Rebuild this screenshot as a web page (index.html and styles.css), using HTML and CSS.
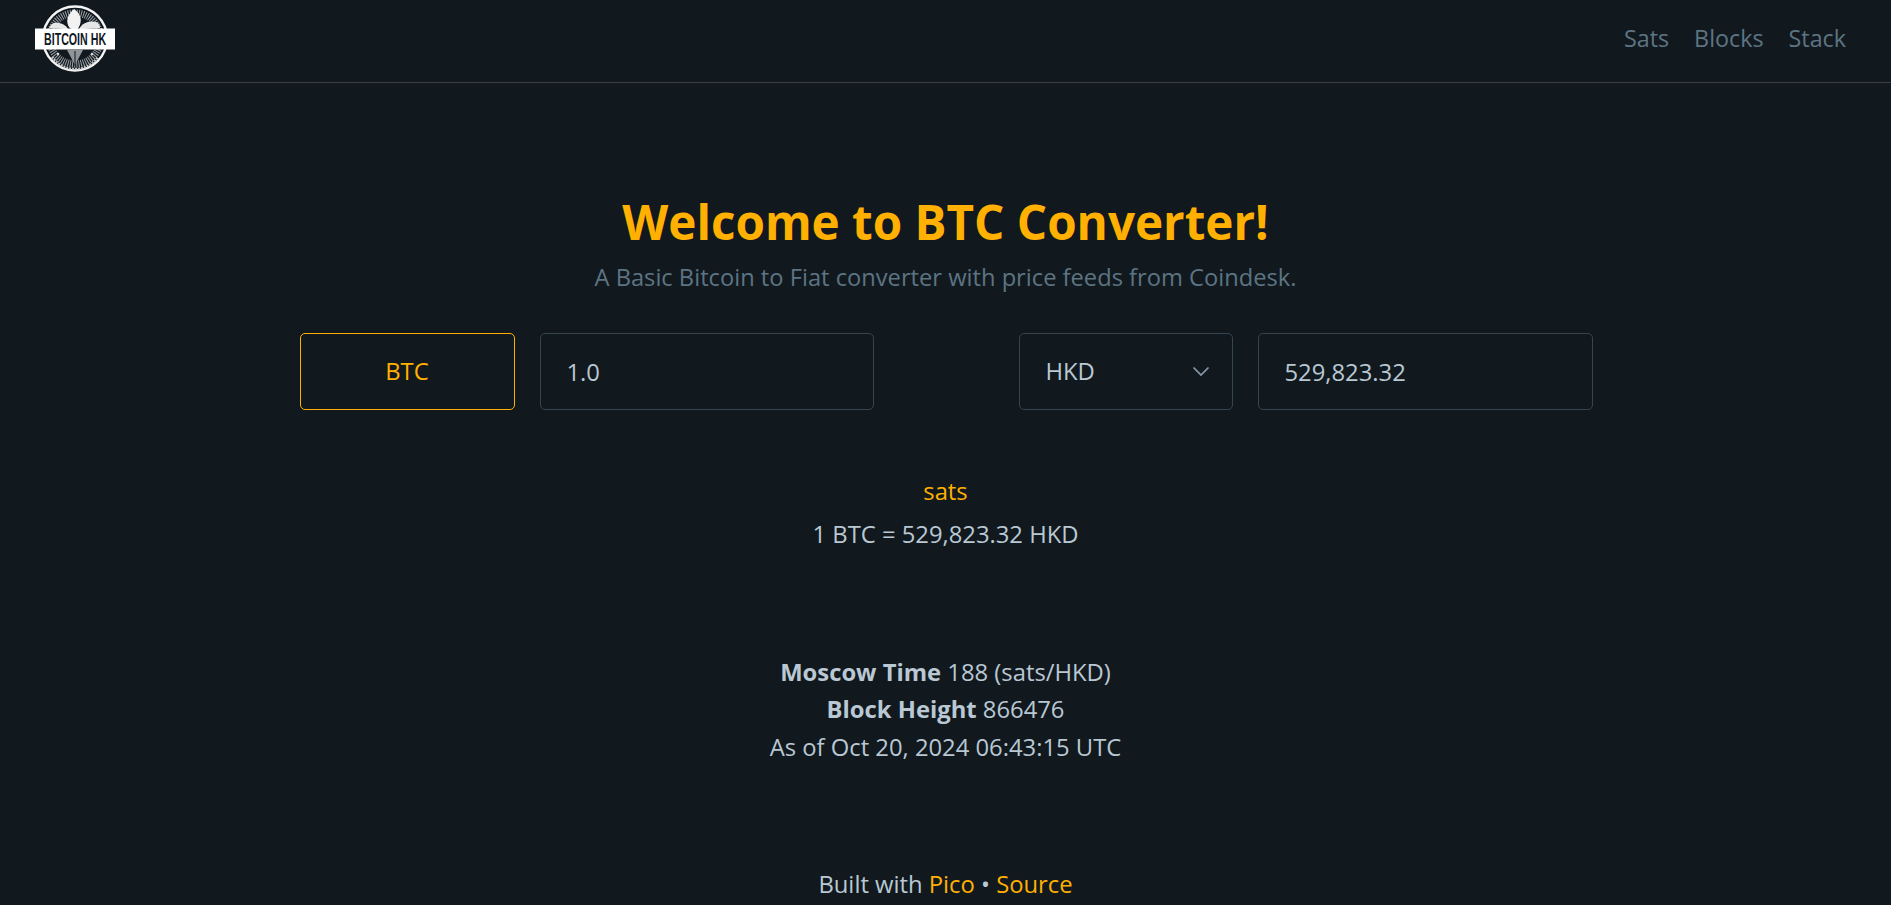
FILE: index.html
```html
<!DOCTYPE html>
<html>
<head>
    <title>BTC Converter</title>
    <meta charset="utf-8">
    <link rel="stylesheet" href="styles.css">
</head>
<body>
    <nav class="topbar">
        <a class="logo" href="#">
            <svg width="82" height="72" viewBox="0 0 82 72">
                <!-- outer rings -->
                <circle cx="41" cy="33.5" r="32" fill="#11191f" stroke="#f4f4f4" stroke-width="2.4"/>
                <circle cx="41" cy="33.5" r="25.5" fill="none" stroke="#9aa0a4" stroke-width="7" stroke-dasharray="1 1.2"/>
                <!-- bauhinia petals -->
                <path d="M40 4c-6 5-8 11-6 16 1 3 3 4 6 5l3 0c5-6 6-15-3-21z" fill="#f2f2f2"/>
                <path d="M45 24c3-6 10-9 17-7 3 1 4 3 4 6l-16 1z" fill="#e6e6e6"/>
                <path d="M34 24c-2-4-8-7-14-6-3 1-4 3-5 5l15 1z" fill="#e6e6e6"/>
                <path d="M41 60l-8-15h16z" fill="#8f9599"/>
                <path d="M41 46v15" stroke="#11191f" stroke-width="1"/>
                <path d="M18 48a28 28 0 0 0 46 0" fill="none" stroke="#c8c8c8" stroke-width="2.4" stroke-dasharray="2 1" transform="translate(0 4)"/>
                <circle cx="24" cy="49" r="1.2" fill="#ddd"/>
                <circle cx="58" cy="49" r="1.2" fill="#ddd"/>
                <!-- banner -->
                <rect x="1" y="23.5" width="80" height="21" fill="#fff"/>
                <text class="logo-text" transform="translate(10 40) scale(.646 1)">BITCOIN HK</text>
            </svg>
        </a>
        <ul class="nav-links">
            <li><a href="#">Sats</a></li>
            <li><a href="#">Blocks</a></li>
            <li><a href="#">Stack</a></li>
        </ul>
    </nav>

    <main class="content">
        <h1>Welcome to BTC Converter!</h1>
        <p class="subtitle">A Basic Bitcoin to Fiat converter with price feeds from Coindesk.</p>

        <div class="converter">
            <div class="pair">
                <button class="unit-btn">BTC</button>
                <input class="field" type="text" value="1.0">
            </div>
            <div class="pair">
                <div class="select-box">
                    <span>HKD</span>
                    <svg width="24" height="24" viewBox="0 0 24 24" fill="none" stroke="#8a99a6" stroke-width="1.7"><path d="M4.5 8.5l7.5 7.5 7.5-7.5"/></svg>
                </div>
                <input class="field" type="text" value="529,823.32">
            </div>
        </div>

        <div class="rate">
            <a href="#">sats</a>
            <p>1 BTC = 529,823.32 HKD</p>
        </div>

        <div class="stats">
            <div><strong>Moscow Time</strong> 188 (sats/HKD)</div>
            <div><strong>Block Height</strong> 866476</div>
            <div>As of Oct 20, 2024 06:43:15 UTC</div>
        </div>

        <footer class="foot">Built with <a href="#">Pico</a> • <a href="#">Source</a></footer>
    </main>
</body>
</html>
```

FILE: styles.css
```css
html, body {
    margin: 0;
    height: 905px;
    overflow: hidden;
}

body {
    background: #11191f;
    color: #b9c8d3;
    font-family: "Open Sans", sans-serif;
    font-size: 23.8px;
    line-height: 37.5px;
}

a {
    color: #ffb000;
    text-decoration: none;
}

.topbar {
    display: flex;
    justify-content: space-between;
    align-items: center;
    height: 82px;
    padding: 0 45px 0 34px;
    border-bottom: 1px solid #3d3f40;
}

.logo {
    display: flex;
}

.logo-text {
    font-family: "Liberation Sans", sans-serif;
    font-size: 16.5px;
    font-weight: 700;
    fill: #11191f;
}

.nav-links {
    display: flex;
    gap: 25px;
    list-style: none;
    margin: 0 0 4px;
    padding: 0;
    font-size: 23.3px;
}

.nav-links a {
    color: #5d7483;
}

.content {
    text-align: center;
}

h1 {
    margin: 109px 0 0;
    color: #ffb000;
    font-size: 47.6px;
    line-height: 60px;
    font-weight: 700;
}

.subtitle {
    margin: 7px 0 0;
    color: #5d7483;
    font-size: 23.7px;
}

.converter {
    display: flex;
    justify-content: center;
    gap: 145px;
    margin-top: 36px;
    padding-left: 1px;
}

.pair {
    display: flex;
    gap: 25px;
}

.unit-btn, .select-box, .field {
    box-sizing: border-box;
    height: 77px;
    padding-top: 2px;
    border-radius: 5px;
    background: #11191f;
    font: inherit;
}

.unit-btn {
    width: 215px;
    border: 1px solid #ffb000;
    color: #ffb000;
}

.select-box {
    display: flex;
    justify-content: space-between;
    align-items: center;
    width: 214px;
    padding: 2px 19px 0 26px;
    border: 1px solid #344450;
}

.select-box svg {
    margin-top: -2px;
}

.field {
    width: 334px;
    padding: 2px 26px 0;
    border: 1px solid #344450;
    color: #b9c8d3;
}

.pair:last-child .field {
    width: 335px;
}

.rate {
    margin-top: 63px;
}

.rate p {
    margin: 6px 0 0;
}

.stats {
    margin-top: 100px;
}

.foot {
    margin-top: 100px;
}
```
